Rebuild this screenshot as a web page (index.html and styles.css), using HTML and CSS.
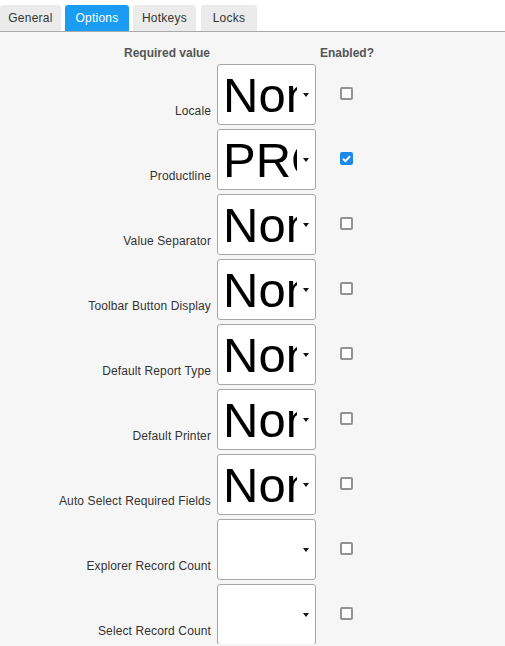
FILE: index.html
```html
<!DOCTYPE html>
<html>
<head>
<meta charset="utf-8">
<link rel="stylesheet" href="styles.css">
</head>
<body>
<div class="tabs">
  <div class="tab t1">General</div>
  <div class="tab t2 active">Options</div>
  <div class="tab t3">Hotkeys</div>
  <div class="tab t4">Locks</div>
</div>
<div class="panel">
  <div class="grid">
    <div class="head head-label">Required value</div>
    <div></div>
    <div class="head head-en">Enabled?</div>

    <div class="label">Locale</div>
    <div class="select"><span class="val">None</span><span class="arrow"></span></div>
    <div class="chk"><span class="box"></span></div>

    <div class="label">Productline</div>
    <div class="select"><span class="val">PRODUCT</span><span class="arrow"></span></div>
    <div class="chk"><span class="box checked"><svg viewBox="0 0 13 13" width="13" height="13"><path d="M3 6.8 L5.4 9.1 L10 4.2" fill="none" stroke="#fff" stroke-width="2"/></svg></span></div>

    <div class="label">Value Separator</div>
    <div class="select"><span class="val">None</span><span class="arrow"></span></div>
    <div class="chk"><span class="box"></span></div>

    <div class="label">Toolbar Button Display</div>
    <div class="select"><span class="val">None</span><span class="arrow"></span></div>
    <div class="chk"><span class="box"></span></div>

    <div class="label">Default Report Type</div>
    <div class="select"><span class="val">None</span><span class="arrow"></span></div>
    <div class="chk"><span class="box"></span></div>

    <div class="label">Default Printer</div>
    <div class="select"><span class="val">None</span><span class="arrow"></span></div>
    <div class="chk"><span class="box"></span></div>

    <div class="label">Auto Select Required Fields</div>
    <div class="select"><span class="val">None</span><span class="arrow"></span></div>
    <div class="chk"><span class="box"></span></div>

    <div class="label">Explorer Record Count</div>
    <div class="select"><span class="val"></span><span class="arrow"></span></div>
    <div class="chk"><span class="box"></span></div>

    <div class="label">Select Record Count</div>
    <div class="select"><span class="val"></span><span class="arrow"></span></div>
    <div class="chk"><span class="box"></span></div>
  </div>
</div>
</body>
</html>
```
FILE: styles.css
```css
html, body {
  margin: 0;
  padding: 0;
  background: #f6f6f6;
  font-family: "Liberation Sans", Arial, sans-serif;
  font-size: 12px;
  color: #333;
}
.tabs {
  display: flex;
  padding-top: 5px;
  background: #fff;
  border-bottom: 1px solid #a9a9a9;
  height: 26px;
}
.tab {
  box-sizing: border-box;
  height: 26px;
  line-height: 27px;
  text-align: center;
  background: #ebebeb;
  border-radius: 3px 3px 0 0;
  color: #333;
  font-size: 12px;
  letter-spacing: 0.25px;
}
.t1 { width: 61px; }
.t2 { width: 64px; margin-left: 4px; }
.t3 { width: 63px; margin-left: 4px; }
.t4 { width: 56px; margin-left: 5px; }
.tab.active {
  background: #1a9cf2;
  color: #fff;
}
.panel {
  padding-top: 12px;
}
.grid {
  display: grid;
  grid-template-columns: 211px 100px 52px;
  grid-template-rows: 15px;
  grid-auto-rows: 60px;
  column-gap: 5px;
  row-gap: 5px;
}
.head {
  font-weight: bold;
  color: #555;
  font-size: 12px;
  line-height: 15px;
  padding-top: 2px;
}
.head-label { text-align: right; padding-right: 1px; }
.head-en { text-align: center; margin-left: -1px; }
.label {
  align-self: end;
  text-align: right;
  padding-bottom: 6px;
  line-height: 14px;
  color: #333;
  letter-spacing: 0.12px;
}
.select {
  box-sizing: border-box;
  height: 61px;
  background: #fff;
  border: 1px solid #a6a6a6;
  border-radius: 3px;
  display: flex;
  align-items: center;
  padding-left: 5px;
  overflow: hidden;
  position: relative;
  margin-left: 1px;
}
.val {
  font-size: 49px;
  color: #000;
  white-space: nowrap;
  overflow: hidden;
  width: 74px;
  line-height: 60px;
}
.arrow {
  position: absolute;
  right: 6px;
  top: 28px;
  width: 0;
  height: 0;
  border-left: 3px solid transparent;
  border-right: 3px solid transparent;
  border-top: 4px solid #111;
}
.chk {
  display: flex;
  justify-content: center;
  align-items: center;
  margin-left: -1px;
}
.box {
  box-sizing: border-box;
  width: 13px;
  height: 13px;
  border: 2px solid #929292;
  border-radius: 2px;
  background: #fff;
  margin-top: -2px;
  display: block;
}
.box.checked {
  background: #1a8ae8;
  border: none;
}
.box svg { display: block; }
```
